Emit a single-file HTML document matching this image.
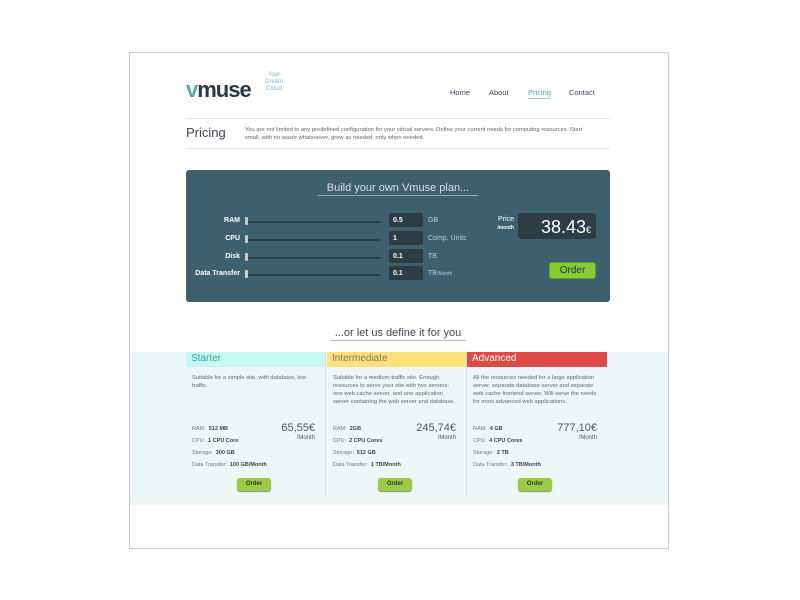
<!DOCTYPE html><html><head><style>
*{margin:0;padding:0;box-sizing:border-box}
body{width:800px;height:600px;background:#fff;font-family:"Liberation Sans",sans-serif;position:relative;overflow:hidden;color:#555}
.a{position:absolute}
.frame{left:129px;top:52px;width:540px;height:497px;border:1px solid #ccc}
.nav{font-size:7.5px;color:#446}
.panel{left:186px;top:170px;width:424px;height:132px;background:#3e5f6d;border-radius:3px}
.lbl{font-size:7px;font-weight:bold;color:#fff;text-align:right;width:60px}
.track{height:2px;background:#2a3f48;width:135px}
.knob{width:3px;height:8px;background:#ccc;border-radius:1px}
.inp{width:34px;height:14px;background:#2c3d45;border-radius:2px;color:#fff;font-size:7px;font-weight:bold;padding:4px 4px}
.unit{font-size:7px;color:#bcd}
.band{left:130px;top:352px;width:538px;height:153px;background:#eef7f8}
.col{top:352px;width:140px;height:145px}
.hd{height:15px;font-size:10px;padding:1px 5px}
.ds{font-size:5.8px;line-height:8px;padding:7px 6px;height:50px;color:#666}
.sp{font-size:5.5px;color:#777;position:absolute;left:6px}
.sp b{color:#444;margin-left:3px}
.pr{position:absolute;right:10px;top:71px;font-size:11px;color:#555;text-align:right;line-height:10px}
.pr small{font-size:6px;display:block}
.ob{position:absolute;left:51px;top:126px;width:34px;height:13px;background:#9c4;border-radius:3px;font-size:6px;font-weight:bold;color:#333;text-align:center;line-height:13px;box-shadow:0 1px 1px #888}
</style></head><body>
<div class="a frame"></div>
<div class="a" style="left:186px;top:77px;font-size:22px;font-weight:bold;color:#2a3a45;letter-spacing:-1px"><span style="color:#5fa5b5">v</span>muse</div>
<div class="a" style="left:265px;top:72px;font-size:6px;color:#7bc;line-height:7px;text-align:center">Your<br>Dream<br>Cloud</div>
<div class="a nav" style="left:450px;top:88px">Home</div>
<div class="a nav" style="left:489px;top:88px">About</div>
<div class="a nav" style="left:528px;top:88px;color:#5a9fb5;border-bottom:1px solid #9cd;padding-bottom:1px">Pricing</div>
<div class="a nav" style="left:569px;top:88px">Contact</div>
<div class="a" style="left:186px;top:118px;width:424px;height:1px;background:#e6e6e6"></div>
<div class="a" style="left:186px;top:148px;width:424px;height:1px;background:#e6e6e6"></div>
<div class="a" style="left:186px;top:125px;font-size:13px;color:#445">Pricing</div>
<div class="a" style="left:245px;top:126px;font-size:5.8px;color:#666;line-height:8px;width:345px">You are not limited to any predefined configuration for your virtual servers. Define your current needs for computing resources. Start small, with no waste whatsoever, grow as needed, only when needed.</div>
<div class="a panel"></div>
<div class="a" style="left:318px;top:182px;width:160px;text-align:center;font-size:11px;color:#dde;border-bottom:1px solid #9ab;padding-bottom:1px">Build your own Vmuse plan...</div>
<div class="a lbl" style="left:180px;top:217px">RAM</div>
<div class="a lbl" style="left:180px;top:235px">CPU</div>
<div class="a lbl" style="left:180px;top:253px">Disk</div>
<div class="a lbl" style="left:180px;top:270px">Data Transfer</div>
<div class="a track" style="left:245px;top:221px"></div><div class="a knob" style="left:245px;top:217px"></div>
<div class="a track" style="left:245px;top:239px"></div><div class="a knob" style="left:245px;top:235px"></div>
<div class="a track" style="left:245px;top:257px"></div><div class="a knob" style="left:245px;top:253px"></div>
<div class="a track" style="left:245px;top:274px"></div><div class="a knob" style="left:245px;top:270px"></div>
<div class="a inp" style="left:389px;top:213px">0.5</div><div class="a unit" style="left:428px;top:217px">GB</div>
<div class="a inp" style="left:389px;top:231px">1</div><div class="a unit" style="left:428px;top:235px">Comp. Units</div>
<div class="a inp" style="left:389px;top:249px">0.1</div><div class="a unit" style="left:428px;top:253px">TB</div>
<div class="a inp" style="left:389px;top:266px">0.1</div><div class="a unit" style="left:428px;top:270px">TB<span style="font-size:5px">/Month</span></div>
<div class="a" style="left:490px;top:216px;font-size:7px;color:#fff;text-align:right;width:24px;line-height:8px">Price<br><span style="font-size:5px;font-weight:bold">/month</span></div>
<div class="a" style="left:518px;top:213px;width:78px;height:26px;background:#2c3d45;border-radius:3px;color:#fff;font-size:18px;text-align:right;padding:4px 5px">38.43<span style="font-size:9px">€</span></div>
<div class="a" style="left:549px;top:262px;width:47px;height:17px;background:#8c3;border:1px solid #5a2;border-radius:3px;color:#234;font-size:10px;text-align:center;line-height:15px">Order</div>
<div class="a" style="left:330px;top:327px;width:136px;text-align:center;font-size:11px;color:#445;border-bottom:1px solid #bbb;padding-bottom:1px">...or let us define it for you</div>
<div class="a band"></div>
<div class="a col" style="left:186px;border-right:1px solid #dde">
<div class="hd" style="background:#c6f7f2;color:#3aa8a8">Starter</div>
<div class="ds">Suitable for a simple site, with database, low traffic.</div>
<div class="sp" style="top:74px">RAM:<b>512 MB</b></div><div class="sp" style="top:86px">CPU:<b>1 CPU Core</b></div><div class="sp" style="top:98px">Storage:<b>300 GB</b></div><div class="sp" style="top:110px">Data Transfer:<b>100 GB/Month</b></div>
<div class="pr">65,55€<small>/Month</small></div><div class="ob">Order</div></div>
<div class="a col" style="left:327px;border-right:1px solid #dde">
<div class="hd" style="background:#fce07a;color:#876">Intermediate</div>
<div class="ds">Suitable for a medium-traffic site. Enough resources to serve your site with two servers: one web cache server, and one application server containing the web server and database.</div>
<div class="sp" style="top:74px">RAM:<b>2GB</b></div><div class="sp" style="top:86px">CPU:<b>2 CPU Cores</b></div><div class="sp" style="top:98px">Storage:<b>512 GB</b></div><div class="sp" style="top:110px">Data Transfer:<b>1 TB/Month</b></div>
<div class="pr">245,74€<small>/Month</small></div><div class="ob">Order</div></div>
<div class="a col" style="left:467px">
<div class="hd" style="background:#de4a48;color:#fff">Advanced</div>
<div class="ds">All the resources needed for a large application server, separate database server and separate web cache frontend server. Will serve the needs for most advanced web applications.</div>
<div class="sp" style="top:74px">RAM:<b>4 GB</b></div><div class="sp" style="top:86px">CPU:<b>4 CPU Cores</b></div><div class="sp" style="top:98px">Storage:<b>2 TB</b></div><div class="sp" style="top:110px">Data Transfer:<b>3 TB/Month</b></div>
<div class="pr">777,10€<small>/Month</small></div><div class="ob">Order</div></div>
</body></html>
